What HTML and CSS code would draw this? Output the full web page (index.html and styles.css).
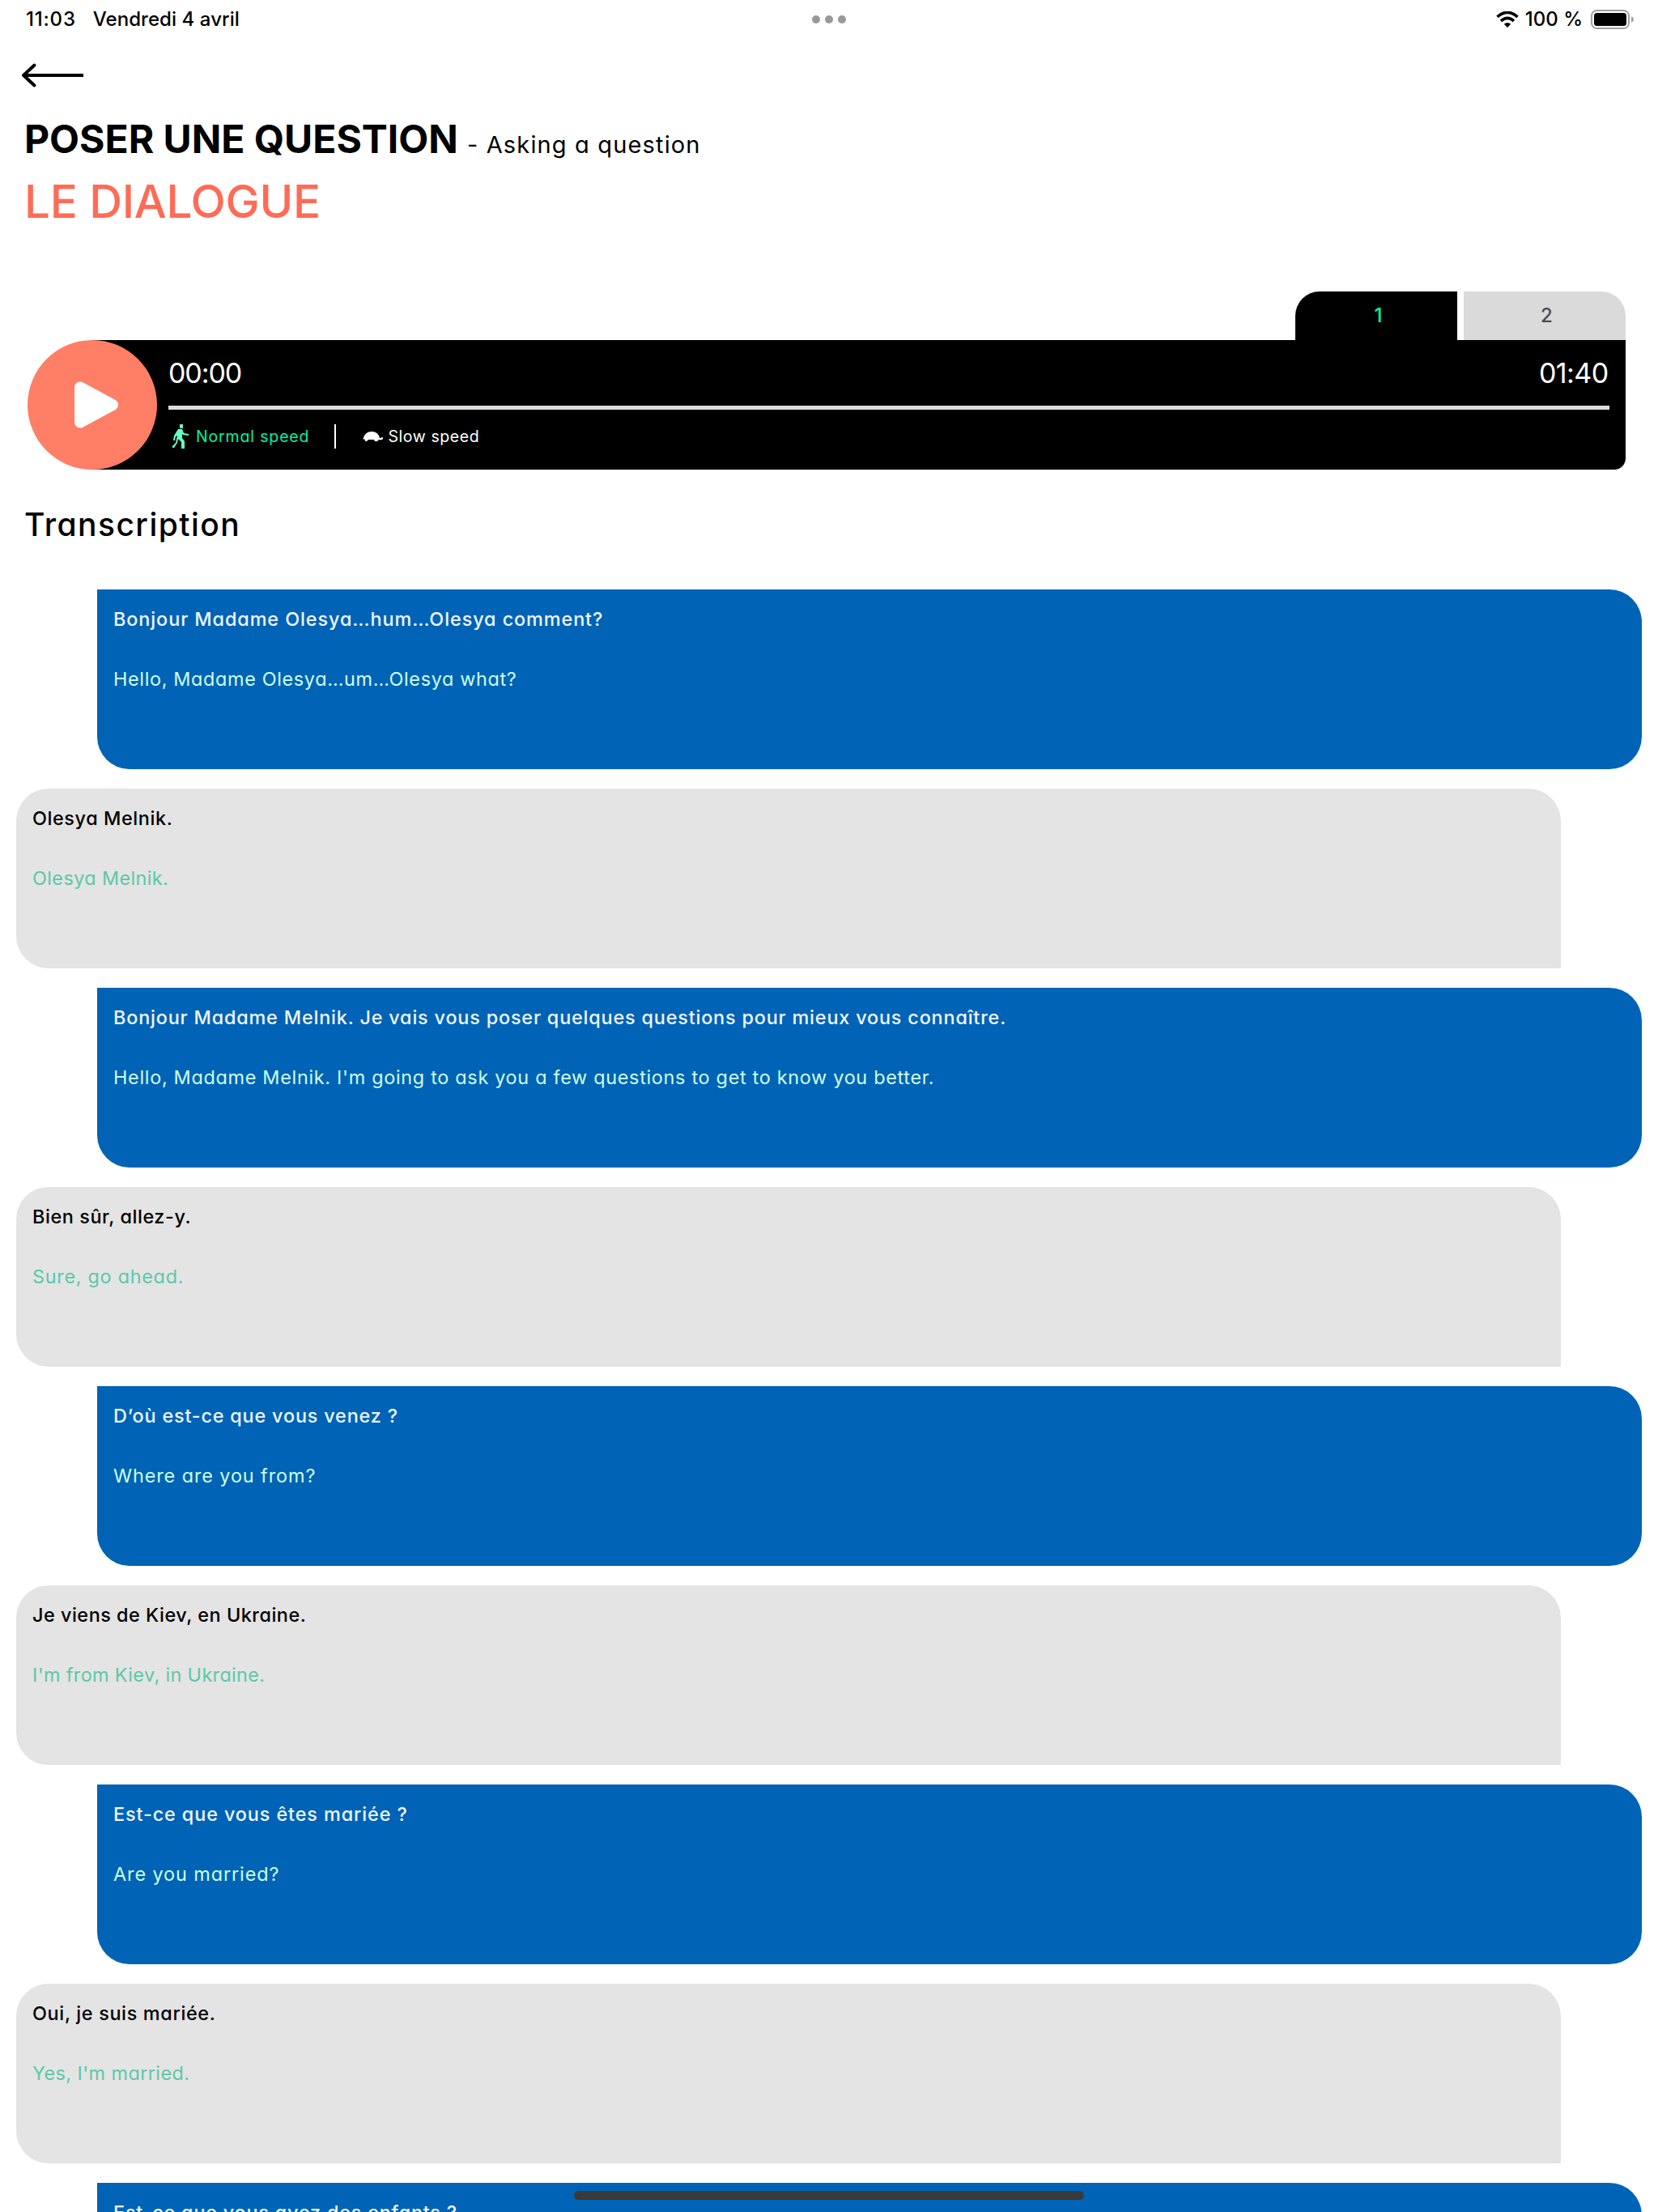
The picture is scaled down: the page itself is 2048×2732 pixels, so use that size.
FILE: index.html
```html
<!DOCTYPE html>
<html lang="fr">
<head>
<meta charset="utf-8">
<title>Poser une question</title>
<link rel="stylesheet" href="styles.css">
</head>
<body>
<header class="status">
  <div class="status-left"><span class="time">11:03</span><span class="date">Vendredi 4 avril</span></div>
  <div class="dots"><i></i><i></i><i></i></div>
  <div class="status-right">
    <svg class="wifi" viewBox="0 0 28 20"><path d="M1.500 6.800Q14-4.200 26.500 6.800" fill="none" stroke="#000" stroke-width="3.600"/><path d="M6 12Q14 4.800 22 12" fill="none" stroke="#000" stroke-width="3.600"/><path d="M9.800 15.800Q14 12.200 18.200 15.800L14 20Z"/></svg>
    <span class="percent">100 %</span>
    <svg class="battery" viewBox="0 0 54 24"><rect x="1" y="1" width="46" height="22" rx="6.500" fill="none" stroke="#a0a0a0" stroke-width="2"/><rect x="4" y="4" width="40" height="16" rx="3.500"/><path d="M50 8Q53 9.500 53 12T50 16Z" fill="#a0a0a0"/></svg>
  </div>
</header>
<nav class="back"><svg viewBox="0 0 78 32"><path d="M3 16H77" stroke="#000" stroke-width="4"/><path d="M16.500 3.500 3 16 16.500 28.500" fill="none" stroke="#000" stroke-width="4" stroke-linecap="round" stroke-linejoin="round"/></svg></nav>
<section class="heading">
  <h1><span class="title">POSER UNE QUESTION</span><span class="subtitle">- Asking a question</span></h1>
  <h2>LE DIALOGUE</h2>
</section>
<section class="audio">
  <div class="tabs"><span class="tab active">1</span><span class="tab">2</span></div>
  <div class="player">
    <button class="play"><svg viewBox="0 0 54 58"><path d="M7 7.500V50.500L47 29Z" fill="#fff" stroke="#fff" stroke-width="14" stroke-linejoin="round"/></svg></button>
    <div class="controls">
      <div class="times"><span class="elapsed">00:00</span><span class="total">01:40</span></div>
      <div class="track"></div>
      <div class="speeds">
        <svg class="walk" viewBox="0 0 20 30"><path d="M9 0h4v5H9zM7 6h5l2 5 6 1v2l-7-1-1-1v5l3 4v9h-4v-8l-4-4-1 5-4 6H0v-2l4-4 2-9-2 1-1 5H1l1-6z"/></svg>
        <span class="normal">Normal speed</span>
        <i class="divider"></i>
        <svg class="turtle" viewBox="0 0 25 12"><path d="M1 8Q3 0 11 0T21 8L25 7V9Q24 11 20 10L18 12H15L14 10H7L5 12H3V10L0 9Z"/></svg>
        <span class="slow">Slow speed</span>
      </div>
    </div>
  </div>
</section>
<h3>Transcription</h3>
<main class="dialogue">
  <article class="line host"><p class="fr">Bonjour Madame Olesya…hum…Olesya comment?</p><p class="en">Hello, Madame Olesya…um…Olesya what?</p></article>
  <article class="line guest"><p class="fr">Olesya Melnik.</p><p class="en">Olesya Melnik.</p></article>
  <article class="line host"><p class="fr">Bonjour Madame Melnik. Je vais vous poser quelques questions pour mieux vous connaître.</p><p class="en">Hello, Madame Melnik. I'm going to ask you a few questions to get to know you better.</p></article>
  <article class="line guest"><p class="fr">Bien sûr, allez-y.</p><p class="en">Sure, go ahead.</p></article>
  <article class="line host"><p class="fr">D’où est-ce que vous venez ?</p><p class="en">Where are you from?</p></article>
  <article class="line guest"><p class="fr">Je viens de Kiev, en Ukraine.</p><p class="en">I'm from Kiev, in Ukraine.</p></article>
  <article class="line host"><p class="fr">Est-ce que vous êtes mariée ?</p><p class="en">Are you married?</p></article>
  <article class="line guest"><p class="fr">Oui, je suis mariée.</p><p class="en">Yes, I'm married.</p></article>
  <article class="line host"><p class="fr">Est-ce que vous avez des enfants ?</p></article>
</main>
<div class="home"></div>
</body>
</html>
```
FILE: styles.css
```css
* { box-sizing: border-box; }
html, body { height: 2732px; overflow: hidden; }
body {
  margin: 0;
  background: #fff;
  color: #000;
  font-family: Inter, "Open Sans", sans-serif;
  position: relative;
}
h1, h2, h3, p { margin: 0; font-weight: 500; }
svg { display: block; flex: none; }

/* Status bar */
.status {
  display: grid;
  grid-template-columns: 1fr auto 1fr;
  align-items: center;
  height: 47px;
  padding: 0 29px;
  font-size: 24px;
  font-weight: 500;
}
.status-left { display: flex; gap: 21px; padding-left: 3px; }
.time { letter-spacing: 0.8px; }
.date { letter-spacing: 0.06px; }
.dots { display: flex; gap: 6px; }
.dots i { width: 10px; height: 10px; border-radius: 50%; background: #999; }
.status-right { display: flex; justify-content: flex-end; align-items: center; }
.wifi { width: 28px; height: 20px; margin-right: 8px; }
.percent { margin-right: 10px; }
.battery { width: 54px; height: 24px; }

.back { height: 89px; padding: 30px 0 0 26px; }
.back svg { width: 78px; height: 32px; }

/* Lesson heading */
.heading { padding-left: 30px; height: 224px; }
h1 { display: flex; align-items: baseline; gap: 11px; line-height: 72px; height: 71px; }
.title { font-size: 48px; font-weight: 700; }
.subtitle { font-size: 29px; font-weight: 400; letter-spacing: 1.15px; }
h2 { font-size: 56.5px; line-height: 84px; letter-spacing: -0.3px; color: #ff6b57; }
h1, h3, .line, .tab, .speeds { font-feature-settings: "cv11"; }

/* Audio player */
.audio { padding: 0 40px 0 34px; }
.tabs { display: flex; justify-content: flex-end; gap: 8px; }
.tab {
  width: 200px;
  height: 60px;
  padding-left: 5px;
  line-height: 60px;
  text-align: center;
  font-size: 24px;
  font-weight: 500;
  background: #dadada;
  color: #4c4c4c;
  border-radius: 0 30px 0 0;
}
.tab.active { background: #000; color: #00f5a0; border-radius: 30px 0 0 0; }
.player {
  display: flex;
  height: 160px;
  background: linear-gradient(#000, #000) 78px 0 no-repeat;
  border-radius: 80px 0 14px 80px;
}
.play {
  flex: none;
  width: 160px;
  height: 160px;
  padding: 0 0 0 58px;
  border: 0;
  border-radius: 50%;
  background: #ff7f66;
}
.play svg { width: 54px; height: 58px; }
.controls { flex: 1; padding: 18px 20px 0 14px; color: #fff; }
.times { display: flex; justify-content: space-between; font-size: 34px; line-height: 45px; height: 63px; }
.elapsed { letter-spacing: -1.1px; }
.total { padding-right: 1.5px; letter-spacing: -0.6px; }
.track { height: 5px; background: #dcdcdc; }
.speeds { display: flex; align-items: center; height: 66px; font-size: 19.5px; }
.walk { width: 20px; height: 30px; margin: 0 9px 0 5px; fill: #66ffc2; }
.normal { color: #00f0a0; letter-spacing: 0.85px; }
.divider { width: 2px; height: 30px; margin: 0 33px 0 31px; background: #fff; }
.turtle { width: 25px; height: 12px; margin-right: 6px; fill: #fff; }
.slow { letter-spacing: 0.6px; }

h3 { height: 148px; padding: 42px 0 0 30px; font-size: 39px; line-height: 52px; letter-spacing: 1.45px; }

/* Dialogue bubbles */
.dialogue { display: flex; flex-direction: column; gap: 24px; }
.line { height: 222px; padding: 18px 20px 0; font-size: 23.4px; line-height: 37px; flex: none; }
.host { margin: 0 20px 0 120px; background: #0063b6; color: #eef6ff; border-radius: 0 40px 40px 40px; }
.guest { margin: 0 120px 0 20px; background: #e4e4e4; border-radius: 40px 40px 0 40px; }
.en { margin-top: 37px; font-weight: 400; }
.host .en { color: #ccffe8; }
.guest .fr { color: #000; }
.guest .en { color: #5bc8a8; }

/* Tracking of each sentence */
.line:nth-child(1) .fr { letter-spacing: 0.917px; }
.line:nth-child(1) .en { letter-spacing: 0.656px; }
.line:nth-child(2) .fr { letter-spacing: 0.6px; }
.line:nth-child(2) .en { letter-spacing: 0.4px; }
.line:nth-child(3) .fr { letter-spacing: 0.821px; }
.line:nth-child(3) .en { letter-spacing: 0.703px; }
.line:nth-child(4) .fr { letter-spacing: 0.58px; }
.line:nth-child(4) .en { letter-spacing: 0.72px; }
.line:nth-child(5) .fr { letter-spacing: 0.82px; }
.line:nth-child(5) .en { letter-spacing: 0.92px; }
.line:nth-child(6) .fr { letter-spacing: 0.52px; }
.line:nth-child(6) .en { letter-spacing: 0.37px; }
.line:nth-child(7) .fr { letter-spacing: 0.9px; }
.line:nth-child(7) .en { letter-spacing: 0.92px; }
.line:nth-child(8) .fr { letter-spacing: 0.66px; }
.line:nth-child(8) .en { letter-spacing: 0.42px; }
.line:nth-child(9) .fr { letter-spacing: 0.8px; }

.home {
  position: absolute;
  left: 709px;
  bottom: 15px;
  width: 630px;
  height: 11px;
  border-radius: 6px;
  background: #3a3a3a;
}
```
